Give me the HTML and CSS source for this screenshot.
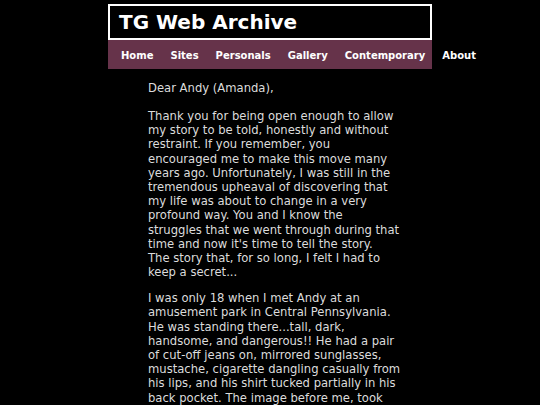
FILE: index.html
```html
<!DOCTYPE html>
<html>
<head>
<meta charset="utf-8">
<link rel="stylesheet" href="styles.css">
</head>
<body>
<div class="site">
  <header class="masthead">
    <h1 class="title">TG Web Archive</h1>
  </header>
  <nav class="nav">
    <a class="nav-item" href="#">Home</a>
    <a class="nav-item" href="#">Sites</a>
    <a class="nav-item" href="#">Personals</a>
    <a class="nav-item" href="#">Gallery</a>
    <a class="nav-item" href="#">Contemporary</a>
    <a class="nav-item" href="#">About</a>
  </nav>
</div>
<main class="story">
  <p class="salutation">Dear Andy (Amanda),</p>
  <p>Thank you for being open enough to allow<br>
  my story to be told, honestly and without<br>
  restraint. If you remember, you<br>
  encouraged me to make this move many<br>
  years ago. Unfortunately, I was still in the<br>
  tremendous upheaval of discovering that<br>
  my life was about to change in a very<br>
  profound way. You and I know the<br>
  struggles that we went through during that<br>
  time and now it's time to tell the story.<br>
  The story that, for so long, I felt I had to<br>
  keep a secret...</p>
  <p>I was only 18 when I met Andy at an<br>
  amusement park in Central Pennsylvania.<br>
  He was standing there...tall, dark,<br>
  handsome, and dangerous!! He had a pair<br>
  of cut-off jeans on, mirrored sunglasses,<br>
  mustache, cigarette dangling casually from<br>
  his lips, and his shirt tucked partially in his<br>
  back pocket. The image before me, took<br>
  my breath away and I knew at that moment that I had to get to know him.</p>
</main>
</body>
</html>
```
FILE: styles.css
```css
html, body {
  margin: 0;
  padding: 0;
  background: #000;
}
body {
  font-family: "DejaVu Sans", Verdana, sans-serif;
  color: #dcdcdc;
  padding-top: 4px;
}
.site {
  width: 60%;
  margin: 0 auto;
}
.masthead {
  border: 2px solid #fff;
  background: #000;
  height: 32px;
  display: flex;
  align-items: center;
}
.title {
  margin: 0 0 0 9px;
  font-size: 20px;
  font-weight: bold;
  color: #fff;
  line-height: 1;
}
.nav {
  background: #66334a;
  height: 29px;
  box-sizing: border-box;
  padding-top: 1px;
  display: flex;
  align-items: center;
  padding-left: 4.5px;
}
.nav-item {
  flex-shrink: 0;
  color: #fff;
  font-size: 10px;
  font-weight: bold;
  text-decoration: none;
  padding: 0 8.5px;
  white-space: nowrap;
}
.story {
  width: 258px;
  margin: 0 0 0 148px;
  font-size: 11.6px;
  line-height: 14.2px;
}
.story p {
  margin: 11.8px 0;
}
.story .salutation {
  margin-top: 12px;
  margin-bottom: 13.8px;
}
```
